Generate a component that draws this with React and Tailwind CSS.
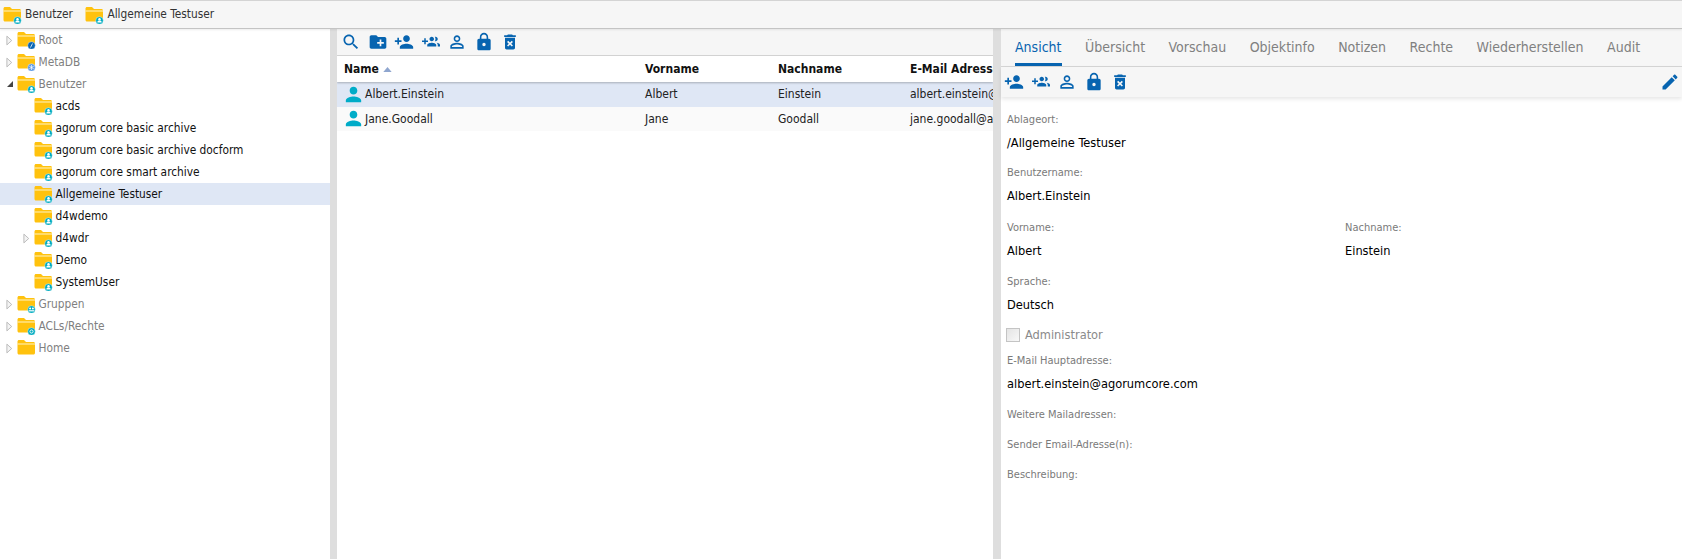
const FONT = "font-['DejaVu_Sans_Condensed','DejaVu_Sans',sans-serif] [font-stretch:condensed]"

const ICONS = {
  search: "M15.5 14h-.79l-.28-.27C15.41 12.59 16 11.11 16 9.5 16 5.91 13.09 3 9.5 3S3 5.91 3 9.5 5.91 16 9.5 16c1.61 0 3.09-.59 4.23-1.57l.27.28v.79l5 4.99L20.49 19l-4.99-5zm-6 0C7.01 14 5 11.99 5 9.5S7.01 5 9.5 5 14 7.01 14 9.5 11.99 14 9.5 14z",
  folderAdd: "M20 6h-8l-2-2H4c-1.11 0-1.99.89-1.99 2L2 18c0 1.11.89 2 2 2h16c1.11 0 2-.89 2-2V8c0-1.11-.89-2-2-2zm-1 8h-3v3h-2v-3h-3v-2h3V9h2v3h3v2z",
  personAdd: "M15 12c2.21 0 4-1.79 4-4s-1.79-4-4-4-4 1.79-4 4 1.79 4 4 4zm-9-2V7H4v3H1v2h3v3h2v-3h3v-2H6zm9 4c-2.67 0-8 1.34-8 4v2h16v-2c0-2.66-5.33-4-8-4z",
  groupAdd: "M8 10H5V7H3v3H0v2h3v3h2v-3h3v-2zm10 1c1.66 0 2.99-1.34 2.99-3S19.66 5 18 5c-.32 0-.63.05-.91.14.57.81.9 1.79.9 2.86s-.34 2.04-.9 2.86c.28.09.59.14.91.14zm-5 0c1.66 0 2.99-1.34 2.99-3S14.66 5 13 5s-3 1.34-3 3 1.34 3 3 3zm6.62 2.16c.83.73 1.38 1.66 1.38 2.84v2h3v-2c0-1.54-2.37-2.49-4.38-2.84zM13 13c-2 0-6 1-6 3v2h12v-2c0-2-4-3-6-3z",
  personOutline: "M12 5.9c1.16 0 2.1.94 2.1 2.1s-.94 2.1-2.1 2.1S9.9 9.16 9.9 8s.94-2.1 2.1-2.1m0 9c2.97 0 6.1 1.46 6.1 2.1v1.1H5.9V17c0-.64 3.13-2.1 6.1-2.1M12 4C9.79 4 8 5.79 8 8s1.79 4 4 4 4-1.79 4-4-1.79-4-4-4zm0 9c-2.67 0-8 1.34-8 4v3h16v-3c0-2.66-5.33-4-8-4z",
  lock: "M18 8h-1V6c0-2.76-2.24-5-5-5S7 3.24 7 6v2H6c-1.1 0-2 .9-2 2v10c0 1.1.9 2 2 2h12c1.1 0 2-.9 2-2V10c0-1.1-.9-2-2-2zm-6 9c-1.1 0-2-.9-2-2s.9-2 2-2 2 .9 2 2-.9 2-2 2zm3.1-9H8.9V6c0-1.71 1.39-3.1 3.1-3.1 1.71 0 3.1 1.39 3.1 3.1v2z",
  trash: "M6 19c0 1.1.9 2 2 2h8c1.1 0 2-.9 2-2V7H6v12zm2.46-7.12l1.41-1.41L12 12.59l2.12-2.12 1.41 1.41L13.41 14l2.12 2.12-1.41 1.41L12 15.41l-2.12 2.12-1.41-1.41L10.59 14l-2.13-2.12zM15.5 4l-1-1h-5l-1 1H5v2h14V4z",
  edit: "M3 17.25V21h3.75L17.81 9.94l-3.75-3.75L3 17.25zM20.71 7.04c.39-.39.39-1.02 0-1.41l-2.34-2.34c-.39-.39-1.02-.39-1.41 0l-1.83 1.83 3.75 3.75 1.83-1.83z",
  person: "M12 12c2.21 0 4-1.79 4-4s-1.79-4-4-4-4 1.79-4 4 1.79 4 4 4zm0 2c-2.67 0-8 1.34-8 4v2h16v-2c0-2.66-5.33-4-8-4z",
}

const Icon = ({ name, className }) => (
  <svg viewBox="0 0 24 24" className={className} fill="currentColor">
    <path d={ICONS[name]} />
  </svg>
)

const Folder = ({ badge = "user" }) => {
  const colors = { user: "#00acc1", root: "#0a66b5", meta: "#5c9ae6", group: "#00acc1", acl: "#00acc1" }
  return (
    <svg viewBox="0 0 20 18" className="w-[20px] h-[18px] shrink-0">
      <path d="M2 1h5l2 2h7.500c.8 0 1.500.7 1.500 1.500V14c0 .8-.7 1.500-1.500 1.500H2c-.8 0-1.500-.7-1.500-1.500V2.500C.5 1.700 1.200 1 2 1z" fill="#ffc20e" />
      <rect x="0.5" y="4.500" width="17.500" height="1" fill="#fff3c4" />
      {badge && (
        <g transform="translate(-0.5 1)">
          <circle cx="15" cy="13.500" r="3.800" fill={colors[badge]} stroke="#fff" strokeWidth="0.4" />
          {badge === "user" && (
            <>
              <circle cx="15" cy="12.300" r="1.200" fill="#fff" />
              <path d="M12.800 15.500c0-1.300 1-1.900 2.200-1.900s2.200.6 2.200 1.900z" fill="#fff" />
            </>
          )}
          {badge === "root" && <path d="M14 15.500l2-4" stroke="#fff" strokeWidth="0.8" />}
          {badge === "meta" && <path d="M15 11v5M12.800 12.200l4.400 2.600M17.200 12.200l-4.400 2.600" stroke="#fff" strokeWidth="0.7" />}
          {badge === "group" && (
            <>
              <circle cx="13.600" cy="12.500" r="1" fill="#fff" />
              <circle cx="16.400" cy="12.500" r="1" fill="#fff" />
              <rect x="12.300" y="14.200" width="5.400" height="1.200" fill="#fff" />
            </>
          )}
          {badge === "acl" && <circle cx="15" cy="13.500" r="1.600" fill="none" stroke="#fff" strokeWidth="0.9" />}
        </g>
      )}
    </svg>
  )
}

const Arrow = ({ open }) =>
  open ? (
    <svg viewBox="0 0 8 8" className="w-[8px] h-[8px]">
      <path d="M7 1v6H1z" fill="#444" />
    </svg>
  ) : (
    <svg viewBox="0 0 8 12" className="w-[7px] h-[11px]">
      <path d="M1 1l5.500 5L1 11z" fill="#f4f4f4" stroke="#b5b5b5" />
    </svg>
  )

const treeRows = [
  { label: "Root", badge: "root", arrow: "closed", muted: true },
  { label: "MetaDB", badge: "meta", arrow: "closed", muted: true },
  { label: "Benutzer", arrow: "open", muted: true },
  { label: "acds", child: true },
  { label: "agorum core basic archive", child: true },
  { label: "agorum core basic archive docform", child: true },
  { label: "agorum core smart archive", child: true },
  { label: "Allgemeine Testuser", child: true, selected: true },
  { label: "d4wdemo", child: true },
  { label: "d4wdr", child: true, arrow: "closed" },
  { label: "Demo", child: true },
  { label: "SystemUser", child: true },
  { label: "Gruppen", badge: "group", arrow: "closed", muted: true },
  { label: "ACLs/Rechte", badge: "acl", arrow: "closed", muted: true },
  { label: "Home", badge: null, arrow: "closed", muted: true },
]

const TreeRow = ({ row }) => (
  <div className={`h-[22px] flex items-center ${row.selected ? "bg-[#dfe7f5]" : ""} ${row.child ? "pl-[23px]" : "pl-[6px]"}`}>
    <div className="w-[11px] flex items-center shrink-0">
      {row.arrow && <Arrow open={row.arrow === "open"} />}
    </div>
    <Folder badge={row.badge === undefined ? "user" : row.badge} />
    <span className={`ml-[1.5px] mt-[1px] text-[11.8px] leading-none ${row.muted ? "text-[#808080]" : "text-[#111]"}`}>{row.label}</span>
  </div>
)

const tableRows = [
  { name: "Albert.Einstein", first: "Albert", last: "Einstein", mail: "albert.einstein@agorumcore.com", bg: "bg-[#dfe7f5]" },
  { name: "Jane.Goodall", first: "Jane", last: "Goodall", mail: "jane.goodall@agorumcore.com", bg: "bg-[#fafafa]" },
]

const tabs = ["Ansicht", "Übersicht", "Vorschau", "Objektinfo", "Notizen", "Rechte", "Wiederherstellen", "Audit"]

const Label = ({ children }) => (
  <div className="h-[24px] flex items-center text-[11px] text-[#7a7a7a]">{children}</div>
)

const Value = ({ children }) => (
  <div className="h-[24px] pb-[2px] flex items-center text-[12.7px] text-black">{children}</div>
)

export default function App() {
  return (
    <div className={`w-[1682px] h-[559px] flex flex-col overflow-hidden bg-white ${FONT}`}>
      <div className="h-[29px] shrink-0 bg-[#f6f6f6] border-t border-t-[#d4d4d4] border-b border-b-[#c4c4c4] shadow-[0_1px_2px_rgba(0,0,0,0.08)] z-10 flex items-center pl-[3px]">
        <Folder />
        <span className="ml-[2px] mt-[1px] text-[11.8px] text-[#333]">Benutzer</span>
        <div className="ml-[12.5px]">
          <Folder />
        </div>
        <span className="ml-[2px] mt-[1px] text-[11.8px] text-[#333]">Allgemeine Testuser</span>
      </div>

      <div className="flex-1 flex min-h-0">
        <div className="w-[330px] shrink-0">
          {treeRows.map((row) => (
            <TreeRow key={row.label} row={row} />
          ))}
        </div>
        <div className="w-[7px] shrink-0 bg-[#dedede]" />

        <div className="w-[656px] shrink-0 flex flex-col overflow-hidden">
          <div className="h-[27px] shrink-0 bg-[#f6f6f6] border-b border-[#d6d6d6] flex items-center gap-[6.5px] pl-[4px] text-[#0764b0]">
            <Icon name="search" className="w-[20px] h-[20px]" />
            <Icon name="folderAdd" className="w-[20px] h-[20px]" />
            <Icon name="personAdd" className="w-[20px] h-[20px]" />
            <Icon name="groupAdd" className="w-[18px] h-[18px] mx-[1px]" />
            <Icon name="personOutline" className="w-[20px] h-[20px]" />
            <Icon name="lock" className="w-[20px] h-[20px]" />
            <Icon name="trash" className="w-[20px] h-[20px]" />
          </div>
          <div className="h-[26px] shrink-0 flex items-center text-[12px] font-bold text-[#111] shadow-[0_1px_2px_rgba(0,0,0,0.25)] z-10 whitespace-nowrap">
            <div className="w-[300px] shrink-0 pl-[7px] flex items-center gap-[4px]">
              Name
              <svg viewBox="0 0 10 6" className="w-[9px] h-[5px]">
                <path d="M5 0l5 6H0z" fill="#8fa6cf" />
              </svg>
            </div>
            <div className="w-[133px] shrink-0 pl-[8px]">Vorname</div>
            <div className="w-[132px] shrink-0 pl-[8px]">Nachname</div>
            <div className="pl-[8px]">E-Mail Adresse</div>
          </div>
          {tableRows.map((r) => (
            <div key={r.name} className={`h-[24.500px] shrink-0 flex items-center text-[12px] text-[#222] whitespace-nowrap ${r.bg}`}>
              <div className="w-[300px] shrink-0 pl-[5px] flex items-center">
                <Icon name="person" className="w-[23px] h-[23px] text-[#00acc8]" />
                {r.name}
              </div>
              <div className="w-[133px] shrink-0 pl-[8px]">{r.first}</div>
              <div className="w-[132px] shrink-0 pl-[8px]">{r.last}</div>
              <div className="pl-[8px]">{r.mail}</div>
            </div>
          ))}
        </div>
        <div className="w-[8px] shrink-0 bg-[#dedede]" />

        <div className="flex-1 min-w-0 flex flex-col">
          <div className="h-[38px] shrink-0 bg-[#f6f6f6] border-b border-[#d6d6d6] flex items-end gap-[23.500px] pl-[14px]">
            {tabs.map((t, i) => (
              <div
                key={t}
                className={`h-[37px] flex items-center text-[14px] border-b-[3px] pt-[3px] ${i === 0 ? "border-[#0764b0] text-[#0764b0]" : "border-transparent text-[#808080]"}`}
              >
                {t}
              </div>
            ))}
          </div>
          <div className="h-[30px] shrink-0 bg-[#f6f6f6] shadow-[0_2px_4px_rgba(0,0,0,0.1)] flex items-center gap-[6.5px] pl-[3px] pr-[2px] text-[#0764b0]">
            <Icon name="personAdd" className="w-[20px] h-[20px]" />
            <Icon name="groupAdd" className="w-[18px] h-[18px] mx-[1px]" />
            <Icon name="personOutline" className="w-[20px] h-[20px]" />
            <Icon name="lock" className="w-[20px] h-[20px]" />
            <Icon name="trash" className="w-[20px] h-[20px]" />
            <Icon name="edit" className="w-[20px] h-[20px] ml-auto" />
          </div>

          <div className="pl-[6px] pt-[11px]">
            <Label>Ablageort:</Label>
            <Value>/Allgemeine Testuser</Value>
            <div className="mt-[5px]">
              <Label>Benutzername:</Label>
              <Value>Albert.Einstein</Value>
            </div>
            <div className="mt-[7px] grid grid-cols-[338px_1fr]">
              <div>
                <Label>Vorname:</Label>
                <Value>Albert</Value>
              </div>
              <div>
                <Label>Nachname:</Label>
                <Value>Einstein</Value>
              </div>
            </div>
            <div className="mt-[6px]">
              <Label>Sprache:</Label>
              <Value>Deutsch</Value>
            </div>
            <div className="mt-[5px] h-[24px] flex items-center gap-[5px] -ml-[1px]">
              <div className="w-[14px] h-[14px] border border-[#c4c4c4] bg-gradient-to-br from-[#e4e4e4] to-[#f8f8f8]" />
              <span className="text-[12.7px] text-[#8a8a8a]">Administrator</span>
            </div>
            <div className="mt-[2px]">
              <Label>E-Mail Hauptadresse:</Label>
              <Value>albert.einstein@agorumcore.com</Value>
            </div>
            <div className="mt-[6px]">
              <Label>Weitere Mailadressen:</Label>
            </div>
            <div className="mt-[6px]">
              <Label>Sender Email-Adresse(n):</Label>
            </div>
            <div className="mt-[6px]">
              <Label>Beschreibung:</Label>
            </div>
          </div>
        </div>
      </div>
    </div>
  )
}
